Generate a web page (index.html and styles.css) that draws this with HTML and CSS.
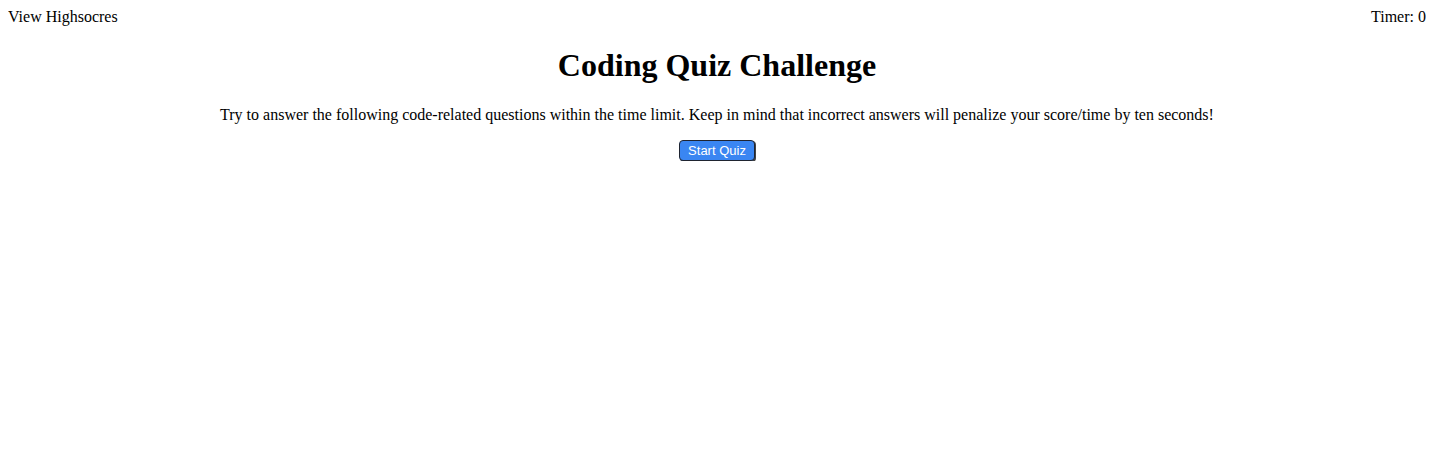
FILE: index.html
```html
<!DOCTYPE html>
<html>
<head>
<meta charset="utf-8">
<link rel="stylesheet" href="styles.css">
</head>
<body>
<header class="top-bar">
  <a class="highscores">View Highsocres</a>
  <div class="timer">Timer: 0</div>
</header>
<main class="intro">
  <h1 class="title">Coding Quiz Challenge</h1>
  <p class="desc">Try to answer the following code-related questions within the time limit. Keep in mind that incorrect answers will penalize your score/time by ten seconds!</p>
  <button class="start-btn">Start Quiz</button>
</main>
</body>
</html>
```

FILE: styles.css
```css
body {
  margin: 8px;
  font-family: "Liberation Serif", "Times New Roman", serif;
  font-size: 16px;
  color: #000;
  background: #fff;
}
.top-bar {
  display: flex;
  justify-content: space-between;
}
.intro {
  text-align: center;
}
.title {
  font-size: 32px;
  font-weight: bold;
  margin: 21.44px 0;
}
.desc {
  margin: 16px 0;
}
.start-btn {
  font-family: "Liberation Sans", Arial, sans-serif;
  font-size: 13px;
  color: #fff;
  background: #3a86f2;
  border: 1px solid #1f2430;
  border-radius: 4px;
  height: 21px;
  padding: 0 8px;
  box-shadow: 1px 1px 0 #444;
}
```
